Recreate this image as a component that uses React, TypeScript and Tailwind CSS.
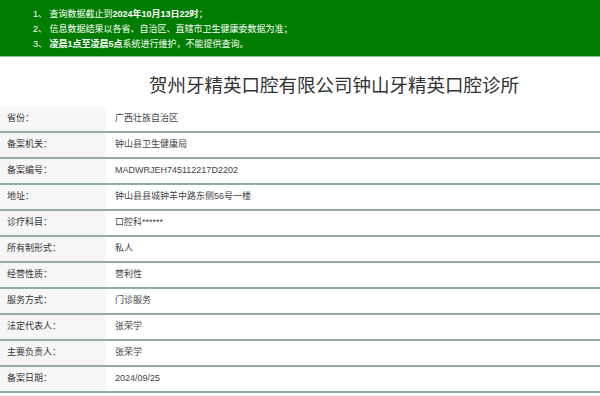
const rows: [string, string][] = [
  ["省份", "广西壮族自治区"],
  ["备案机关", "钟山县卫生健康局"],
  ["备案编号", "MADWRJEH745112217D2202"],
  ["地址", "钟山县县城钟羊中路东侧56号一楼"],
  ["诊疗科目", "口腔科******"],
  ["所有制形式", "私人"],
  ["经营性质", "营利性"],
  ["服务方式", "门诊服务"],
  ["法定代表人", "张荣学"],
  ["主要负责人", "张荣学"],
  ["备案日期", "2024/09/25"],
];

export default function App() {
  return (
    <div
      className="w-[600px] h-[396px] overflow-hidden bg-white text-[#333]"
      style={{ fontFamily: '"Liberation Sans", "Noto Sans CJK SC", sans-serif' }}
    >
      {/* Notice banner */}
      <div className="h-[57px] bg-[#007d00] border-b border-[#8cc48c] pt-[7px] pl-[33px] text-white text-[9px] leading-[15px]">
        <p>
          1、 查询数据截止到<span className="font-bold">2024年10月13日22时</span>；
        </p>
        <p>2、 信息数据结果以各省、自治区、直辖市卫生健康委数据为准；</p>
        <p>
          3、 <span className="font-bold">凌晨1点至凌晨5点</span>系统进行维护，不能提供查询。
        </p>
      </div>

      {/* Title */}
      <div className="h-[50px] pt-[17px] pl-[68px] text-center">
        <h1 className="text-[18.5px] leading-[24px] text-[#333]">
          贺州牙精英口腔有限公司钟山牙精英口腔诊所
        </h1>
      </div>

      {/* Info table */}
      <div className="flex flex-col">
        {rows.map(([label, value]) => (
          <div key={label} className="flex h-[26px] border-b-2 border-[#93ada1] text-[9px]">
            <div className="w-[106px] bg-[#f6f6f6] pl-[7px] flex items-center">{label}：</div>
            <div className="flex-1 pl-[9px] flex items-center text-[#444]">{value}</div>
          </div>
        ))}
      </div>
    </div>
  );
}
